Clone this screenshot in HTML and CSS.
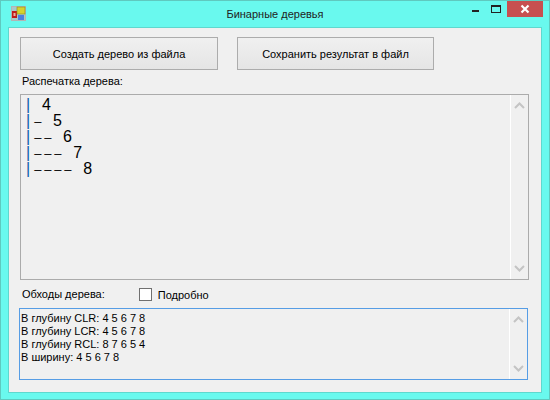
FILE: index.html
```html
<!DOCTYPE html>
<html lang="ru">
<head>
  <meta charset="UTF-8" />
  <title>Бинарные деревья</title>
  <link rel="stylesheet" href="styles.css">
</head>
<body>
  <div class="window">
    <div class="titlebar">
      <svg class="app-icon" width="15" height="15" viewBox="0 0 15 15">
        <rect x="0.5" y="0.5" width="14" height="14" fill="#a9c8c8" stroke="#b4b4b4"/>
        <rect x="1" y="5" width="5" height="7" fill="#c11a1a"/>
        <rect x="2.5" y="7" width="2" height="3" fill="#e9b0a0"/>
        <rect x="6" y="1" width="8" height="7" fill="#d6d22c" stroke="#8c8a1c" stroke-width="0.6"/>
        <rect x="7" y="9" width="6" height="5" fill="#4a7fe0"/>
      </svg>
      <div class="title">Бинарные деревья</div>
      <div class="controls">
        <div class="btn-min"></div>
        <div class="btn-max"></div>
        <div class="btn-close">
          <svg width="10" height="10" viewBox="0 0 10 10"><path d="M1.5 1.5 L8.5 8.5 M8.5 1.5 L1.5 8.5" stroke="#fff" stroke-width="2.2"/></svg>
        </div>
      </div>
    </div>

    <div class="client">
      <div class="buttons">
        <button class="btn">Создать дерево из файла</button>
        <button class="btn btn-save">Сохранить результат в файл</button>
      </div>

      <div class="label print-label">Распечатка дерева:</div>
      <div class="textbox tree-box">
        <div class="tree">
          <div class="tree-line"><span class="pipe">|</span>  4</div>
          <div class="tree-line"><span class="pipe">|</span><span class="dash">–</span>  5</div>
          <div class="tree-line"><span class="pipe">|</span><span class="dash">––</span>  6</div>
          <div class="tree-line"><span class="pipe">|</span><span class="dash">–––</span>  7</div>
          <div class="tree-line"><span class="pipe">|</span><span class="dash">––––</span>  8</div>
        </div>
        <div class="scrollbar">
          <svg width="11" height="7" viewBox="0 0 11 7"><path d="M1 6 L5.5 1.5 L10 6" fill="none" stroke="#c4c4c4" stroke-width="2"/></svg>
          <svg width="11" height="7" viewBox="0 0 11 7"><path d="M1 1 L5.5 5.5 L10 1" fill="none" stroke="#c4c4c4" stroke-width="2"/></svg>
        </div>
      </div>

      <div class="options">
        <div class="label">Обходы дерева:</div>
        <label class="check"><span class="checkbox"></span>Подробно</label>
      </div>

      <div class="textbox result-box">
        <div class="results">
          <div>В глубину CLR: 4 5 6 7 8</div>
          <div>В глубину LCR: 4 5 6 7 8</div>
          <div>В глубину RCL: 8 7 6 5 4</div>
          <div>В ширину: 4 5 6 7 8</div>
        </div>
        <div class="scrollbar">
          <svg width="11" height="7" viewBox="0 0 11 7"><path d="M1 6 L5.5 1.5 L10 6" fill="none" stroke="#c4c4c4" stroke-width="2"/></svg>
          <svg width="11" height="7" viewBox="0 0 11 7"><path d="M1 1 L5.5 5.5 L10 1" fill="none" stroke="#c4c4c4" stroke-width="2"/></svg>
        </div>
      </div>
    </div>
  </div>
</body>
</html>
```

FILE: styles.css
```css
html, body {
  margin: 0;
  padding: 0;
}
body {
  width: 550px;
  height: 400px;
  overflow: hidden;
  font-family: "Liberation Sans", Arial, sans-serif;
  font-size: 11px;
  color: #000;
}
.window {
  box-sizing: border-box;
  width: 550px;
  height: 400px;
  background: #69f9ee;
  border: 1px solid #5fc9bf;
  padding: 0 7px 6px 7px;
  display: flex;
  flex-direction: column;
}
.titlebar {
  height: 26px;
  display: flex;
  align-items: flex-start;
  position: relative;
  flex-shrink: 0;
}
.app-icon {
  margin: 5px 0 0 3px;
}
.title {
  position: absolute;
  left: 0;
  right: 0;
  top: 5px;
  text-align: center;
  line-height: 17px;
  color: #222;
}
.controls {
  margin-left: auto;
  margin-right: -1px;
  display: flex;
  align-items: flex-start;
  position: relative;
}
.btn-min {
  width: 7px;
  height: 2px;
  background: #222;
  margin: 9px 12px 0 0;
}
.btn-max {
  box-sizing: border-box;
  width: 10px;
  height: 8px;
  border: 1px solid #222;
  border-top-width: 2px;
  margin: 4px 6px 0 0;
}
.btn-close {
  width: 36px;
  height: 16px;
  background: #c75050;
  display: flex;
  align-items: center;
  justify-content: center;
}
.client {
  flex: 1;
  box-sizing: border-box;
  background: #f0f0f0;
  border: 1px solid #5fd8ce;
  padding: 9px 12px 0 11px;
}
.buttons {
  display: flex;
  gap: 19px;
}
.btn {
  width: 198px;
  height: 33px;
  background: linear-gradient(to bottom, #f0f0f0, #e5e5e5);
  border: 1px solid #acacac;
  border-radius: 0;
  font-family: inherit;
  font-size: 11px;
  color: #000;
  padding: 0;
}
.btn-save {
  width: 197px;
}
.label {
  line-height: 17px;
}
.print-label {
  margin: 3px 0 4px 2px;
}
.textbox {
  box-sizing: border-box;
  display: flex;
  justify-content: space-between;
  background: #f0f0f0;
  border: 1px solid #ababab;
  width: 509px;
}
.tree-box {
  height: 186px;
}
.tree {
  padding: 2px 0 0 5px;
  font-size: 16px;
  line-height: 16px;
  color: #000;
}
.tree-line {
  height: 16px;
  white-space: pre;
}
.pipe {
  color: #0a5fa8;
  margin-right: 3px;
}
.dash {
  font-size: 13px;
  letter-spacing: 2.8px;
  margin-left: 1px;
}
.scrollbar {
  box-sizing: border-box;
  width: 18px;
  border-left: 1px solid #fff;
  padding: 7px 0;
  display: flex;
  flex-direction: column;
  justify-content: space-between;
  align-items: center;
}
.options {
  display: flex;
  align-items: center;
  margin: 8px 0 7px 2px;
  height: 13px;
}
.check {
  display: flex;
  align-items: center;
  margin-left: 34px;
}
.checkbox {
  box-sizing: border-box;
  width: 13px;
  height: 13px;
  background: #fff;
  border: 1px solid #707070;
  margin-right: 6px;
}
.result-box {
  height: 72px;
  margin-left: -1px;
  border-color: #569de5;
}
.results {
  padding: 3px 0 0 1px;
  line-height: 13px;
  color: #000;
}
```
